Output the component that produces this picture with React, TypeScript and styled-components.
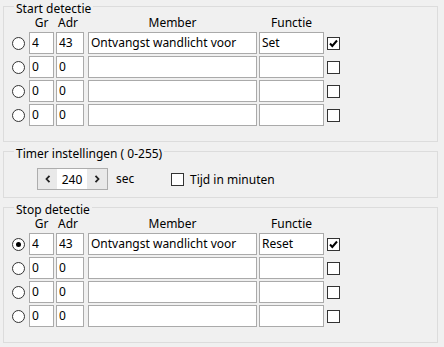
import React from "react";
import styled, { createGlobalStyle } from "styled-components";

const GlobalStyle = createGlobalStyle`
  html, body { margin: 0; padding: 0; background: #f0f0f0; }
  body {
    font-family: "Segoe UI", "Noto Sans", "Open Sans", sans-serif;
    font-size: 12px;
    color: #000;
  }
`;

const Page = styled.div`
  width: 444px;
  height: 347px;
  padding: 0 0 0 3px;
  box-sizing: border-box;
  display: flex;
  flex-direction: column;
  gap: 3px;
`;

const Group = styled.fieldset<{ $pb?: number }>`
  margin: 0;
  width: 435px;
  box-sizing: border-box;
  border: 1px solid #dcdcdc;
  padding: 0 0 ${(p) => p.$pb ?? 15}px 8px;
  min-width: 0;
`;

const Legend = styled.legend`
  padding: 4px 2px 0;
  margin-left: 2px;
  line-height: 9px;
  height: 13px;
  box-sizing: border-box;
  white-space: nowrap;
`;

const Grid = styled.div`
  display: grid;
  grid-template-columns: 17px 27px 32px 171px 68px 13px;
  row-gap: 2px;
  align-items: center;
`;

const Header = styled.div<{ $w: number; $shift?: number }>`
  width: ${(p) => p.$w}px;
  height: 17px;
  text-align: center;
  line-height: 14px;
  padding-top: 3px;
  padding-right: ${(p) => p.$shift ?? 0}px;
  box-sizing: border-box;
  white-space: nowrap;
`;

const Field = styled.input<{ $w: number }>`
  width: ${(p) => p.$w}px;
  height: 22px;
  box-sizing: border-box;
  border: 1px solid #aaaaaa;
  background: #fff;
  padding: 0 0 1px 2px;
  margin: 0;
  font: inherit;
  font-size: 12px;
  color: #000;
  outline: none;
`;

const Radio = styled.span<{ $on?: boolean }>`
  width: 13px;
  height: 13px;
  box-sizing: border-box;
  border: 1px solid #333;
  border-radius: 50%;
  background: #fff;
  display: flex;
  align-items: center;
  justify-content: center;
  &::after {
    content: "";
    width: 5px;
    height: 5px;
    border-radius: 50%;
    background: ${(p) => (p.$on ? "#000" : "transparent")};
  }
`;

const Box = styled.span`
  width: 13px;
  height: 13px;
  box-sizing: border-box;
  border: 1px solid #333;
  background: #fff;
  display: flex;
  align-items: center;
  justify-content: center;
  flex: none;
`;

const Check = ({ on }: { on?: boolean }) => (
  <Box>
    {on && (
      <svg width="9" height="9" viewBox="0 0 9 9">
        <path d="M1 4.5 L3.3 7 L8 1.5" fill="none" stroke="#000" strokeWidth="2" />
      </svg>
    )}
  </Box>
);

const TimerRow = styled.div`
  display: flex;
  align-items: center;
  padding: 10px 0 0 25px;
  height: 22px;
`;

const Spinner = styled.div`
  display: flex;
  width: 71px;
  height: 22px;
  box-sizing: border-box;
  border: 1px solid #adadad;
  background: #fff;
`;

const SpinBtn = styled.div<{ $w: number }>`
  width: ${(p) => p.$w}px;
  background: #e9e9e9;
  display: flex;
  align-items: center;
  justify-content: center;
`;

const SpinValue = styled.div`
  flex: 1;
  text-align: center;
  line-height: 20px;
  padding-top: 1px;
`;

const Unit = styled.span`
  margin-left: 8px;
  width: 55px;
  line-height: 22px;
`;

const CheckLabel = styled.label`
  display: flex;
  align-items: center;
  gap: 6px;
  white-space: nowrap;
`;

type Row = { on: boolean; gr: string; adr: string; member: string; fn: string; chk: boolean };

const Chevron = ({ dir }: { dir: "l" | "r" }) => (
  <svg width="6" height="8" viewBox="0 0 6 8">
    <path
      d={dir === "l" ? "M4.5 0.8 L1.5 4 L4.5 7.2" : "M1.5 0.8 L4.5 4 L1.5 7.2"}
      fill="none"
      stroke="#222"
      strokeWidth="1.8"
    />
  </svg>
);

const DetectGroup = ({ title, rows }: { title: string; rows: Row[] }) => (
  <Group>
    <Legend>{title}</Legend>
    <Grid>
      <span />
      <Header $w={25}>Gr</Header>
      <Header $w={28} $shift={4}>Adr</Header>
      <Header $w={169}>Member</Header>
      <Header $w={65}>Functie</Header>
      <span />
      {rows.map((r, i) => (
        <React.Fragment key={i}>
          <Radio $on={r.on} />
          <Field $w={25} readOnly value={r.gr} />
          <Field $w={28} readOnly value={r.adr} />
          <Field $w={169} readOnly value={r.member} />
          <Field $w={65} readOnly value={r.fn} />
          <Check on={r.chk} />
        </React.Fragment>
      ))}
    </Grid>
  </Group>
);

const empty: Row = { on: false, gr: "0", adr: "0", member: "", fn: "", chk: false };

const startRows: Row[] = [
  { on: false, gr: "4", adr: "43", member: "Ontvangst wandlicht voor", fn: "Set", chk: true },
  empty,
  empty,
  empty,
];

const stopRows: Row[] = [
  { on: true, gr: "4", adr: "43", member: "Ontvangst wandlicht voor", fn: "Reset", chk: true },
  empty,
  empty,
  empty,
];

export default function App() {
  return (
    <>
      <GlobalStyle />
      <Page>
        <DetectGroup title="Start detectie" rows={startRows} />
        <Group $pb={7}>
          <Legend>Timer instellingen ( 0-255)</Legend>
          <TimerRow>
            <Spinner>
              <SpinBtn $w={19}>
                <Chevron dir="l" />
              </SpinBtn>
              <SpinValue>240</SpinValue>
              <SpinBtn $w={20}>
                <Chevron dir="r" />
              </SpinBtn>
            </Spinner>
            <Unit>sec</Unit>
            <CheckLabel>
              <Check />
              Tijd in minuten
            </CheckLabel>
          </TimerRow>
        </Group>
        <DetectGroup title="Stop detectie" rows={stopRows} />
      </Page>
    </>
  );
}
